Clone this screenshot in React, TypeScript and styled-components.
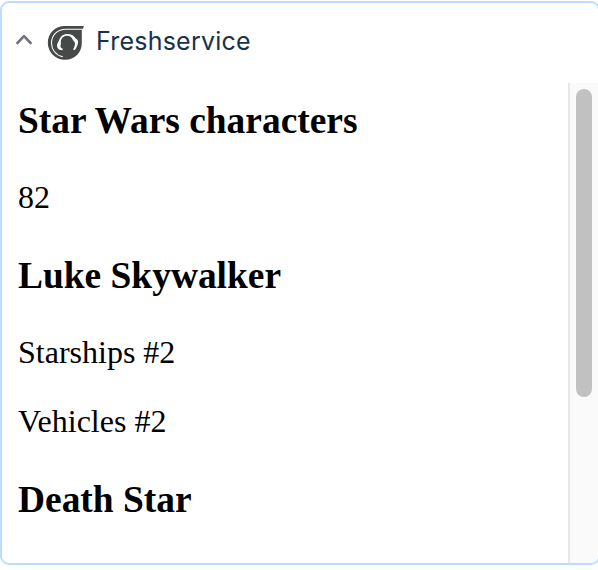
import React from "react";
import styled, { createGlobalStyle } from "styled-components";

const GlobalStyle = createGlobalStyle`
  * { box-sizing: border-box; }
  html, body { margin: 0; background: #fff; overflow: hidden; }
`;

const Viewport = styled.main`
  width: 598px;
  height: 570px;
  padding-top: 1px;
  overflow: hidden;
`;

const Panel = styled.section`
  display: flex;
  flex-direction: column;
  width: 600px;
  height: 564px;
  border: 2px solid #bddbff;
  border-radius: 9px;
  background: #fff;
  overflow: hidden;
`;

const Header = styled.header`
  display: flex;
  align-items: center;
  flex: 0 0 80px;
  padding-left: 12px;
`;

const Chevron = styled.svg`
  width: 20px;
  height: 20px;
  margin: 0 12px 6px 0;
`;

const Logo = styled.svg`
  width: 40px;
  height: 40px;
  margin-right: 10px;
`;

const Title = styled.span`
  margin-bottom: 5px;
  font: 400 25px/32px Inter, sans-serif;
  letter-spacing: 0.22px;
  color: #183247;
`;

const Body = styled.div`
  display: flex;
  flex: 1;
  min-height: 0;
`;

const Content = styled.div`
  flex: 0 0 566px;
  padding: 16px 16px 0;
  font-family: "Liberation Serif", "Times New Roman", serif;
  color: #000;
  overflow: hidden;
`;

const Heading = styled.h3`
  margin: 0 0 37px;
  font-size: 37.44px;
  line-height: 43px;
`;

const Text = styled.p<{ $last?: boolean }>`
  margin: 0 0 ${(p) => (p.$last ? 38 : 32)}px;
  font-size: 32px;
  line-height: 37px;
`;

const Track = styled.div`
  flex: 0 0 30px;
  padding: 6px;
  border: solid #e8e8e8;
  border-width: 0 2px;
  background: #fafafa;
`;

const Thumb = styled.div`
  width: 16px;
  height: 308px;
  border-radius: 8px;
  background: #c1c1c1;
`;

export default function App() {
  return (
    <>
      <GlobalStyle />
      <Viewport>
        <Panel>
          <Header>
            <Chevron viewBox="0 0 20 20" aria-hidden="true">
              <path d="M3.4 13 10 6.2l6.6 6.8" fill="none" stroke="#727083" strokeWidth="2.6" strokeLinecap="round" strokeLinejoin="round" />
            </Chevron>
            <Logo viewBox="0 0 40 40" aria-hidden="true">
              <path d="M37.8 3H19C9.2 3 1.8 10.4 1.8 19.8S9.2 36.8 19 36.8 35.8 29.5 35.8 20V7.2L37.2 5.4Z" fill="#454a48" />
              <path d="M38 6.2H20C11.5 6.2 5.5 12 5.5 20C5.5 26.5 9.6 32.2 16.8 33.8" fill="none" stroke="#fff" strokeWidth="1.1" />
              <path d="M16.2 27.3C12.4 27.2 10.6 24.8 11.2 21.6C11.5 20.1 12.2 19.4 12.9 17.6C14.5 13.2 17.4 11.1 21.2 11.1C25 11.1 27.8 12.5 29.4 15.3C31.3 16.4 32.5 17.7 32.1 19.8C31.5 22.6 30.4 25.2 28.8 27.1L26.9 26.6C28.5 24.2 29.4 21.5 28.8 19.6C28.3 18.2 27.3 18 26.8 16.7C25.8 14.2 23.8 12.8 21.2 12.8C17.5 12.8 14.8 15.5 14.8 18.8C14.8 20 15.1 21.1 14.6 22.2C14 23.8 14.7 25 17 26Z" fill="#fff" />
            </Logo>
            <Title>Freshservice</Title>
          </Header>
          <Body>
            <Content>
              <Heading>Star Wars characters</Heading>
              <Text $last>82</Text>
              <Heading>Luke Skywalker</Heading>
              <Text>Starships #2</Text>
              <Text $last>Vehicles #2</Text>
              <Heading>Death Star</Heading>
            </Content>
            <Track>
              <Thumb />
            </Track>
          </Body>
        </Panel>
      </Viewport>
    </>
  );
}
